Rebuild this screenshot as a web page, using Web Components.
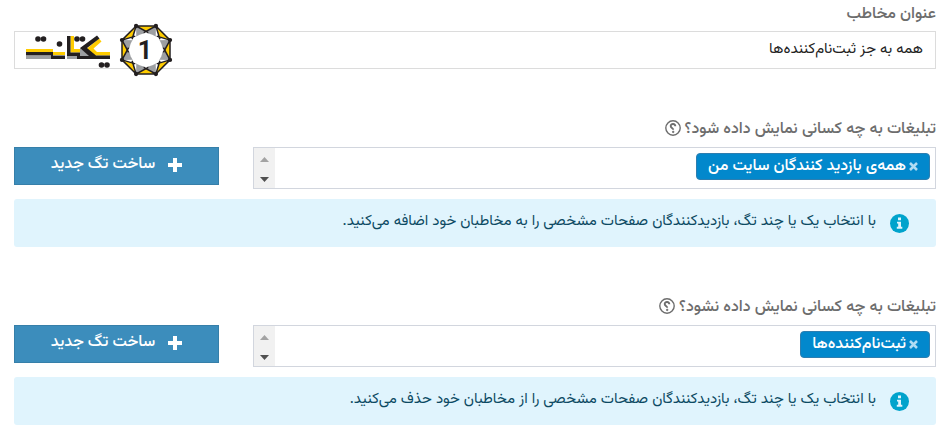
<!DOCTYPE html>
<html lang="fa" dir="rtl">
<head>
<meta charset="utf-8">
<title>مخاطب</title>
<style>
  body { margin: 0; background: #fff; font-family: Vazirmatn, "Noto Sans Arabic", "DejaVu Sans", sans-serif; font-size: 15px; line-height: 24px; color: #222; }
</style>
</head>
<body>
<audience-form></audience-form>

<script>
const define = (name, html, setup) => {
  const template = document.createElement("template");
  template.innerHTML = html;
  customElements.define(name, class extends HTMLElement {
    constructor() {
      super();
      this.attachShadow({ mode: "open" }).append(template.content.cloneNode(true));
    }
    connectedCallback() { if (setup) setup(this, this.shadowRoot); }
  });
};

/* Octagonal badge: rim triangles in yellow, corner facets in grey. */
const badge = () => {
  const at = (r, deg) => {
    const a = deg * Math.PI / 180;
    return `${(120 + r * Math.cos(a)).toFixed(1)},${(27 + r * Math.sin(a)).toFixed(1)}`;
  };
  let fills = "", lines = "";
  for (let i = 0; i < 8; i++) {
    const a = 22.5 + i * 45;
    const s = i % 2 ? 1 : -1;
    const [x, y] = at(26, a).split(",");
    fills += `<polygon points="${at(26, a)} ${at(26, a + 45)} ${at(19, a + 22.5)}" fill="#fc0"/>`;
    fills += `<polygon points="${at(26, a)} ${at(19, a + 22.5 * s)} ${at(15, a + 10 * s)} ${at(15, a - 18 * s)}" fill="#9d9fa2"/>`;
    lines += `<path d="M${at(26, a)}L${at(17.5, a + 30)}M${at(26, a)}L${at(17.5, a - 30)}M${at(26, a)}L${at(26, a + 45)}"/>`;
    lines += `<circle cx="${x}" cy="${y}" r="1.4" fill="#231f20"/>`;
  }
  return `<circle cx="120" cy="27" r="24" fill="#fff"/>${fills}<circle cx="120" cy="27" r="16.6" fill="#fff"/><g stroke="#231f20" stroke-width="1.5">${lines}</g>`;
};

define("brand-logo", `
  <style>
    :host { display: block; direction: ltr; pointer-events: none; }
    svg { display: block; }
  </style>
  <svg width="148" height="54" viewBox="0 0 148 54" fill="none" role="img" aria-label="یکتانت">
    <g fill="#fc0">
      <path d="M0 26H27V29H39V32H26V29H0Z"/>
      <path d="M44.500 13H48V26H55V29.500H44.500Z"/>
      <path d="M73 15.500L75.500 18.500L67.500 25.500L71 29H84V32.500H69L61 25.500Z"/>
    </g>
    <g fill="#9d9fa2">
      <path d="M0 33H25V36H0ZM41 33H51V36H41Z"/>
      <path d="M54 25L65 33H54Z"/>
    </g>
    <g fill="#231f20">
      <path d="M0 29H27V32.500H39V36H25V32.500H0Z"/>
      <path d="M41 13H44.500V29.500H54V33H41Z"/>
      <path d="M71 12.500L73.500 15.500L61 25L70 32.500H84V36H51V33H63L54 25Z"/>
      <circle cx="12" cy="16" r="2.800"/><circle cx="17.500" cy="16" r="2.800"/><circle cx="33.500" cy="21" r="2.800"/>
      <circle cx="51" cy="16" r="2.800"/><circle cx="56.500" cy="16" r="2.800"/><circle cx="75.500" cy="42" r="2.800"/><circle cx="81" cy="42" r="2.800"/>
    </g>
    ${badge()}
    <text x="119" y="36" text-anchor="middle" font-family="Roboto, sans-serif" font-weight="700" font-size="25" fill="#231f20">1</text>
  </svg>`);

define("title-field", `
  <style>
    :host { display: block; }
    label { display: block; margin-bottom: 4px; color: #6d6d6d; font-size: 16px; font-weight: 500; }
    .box { position: relative; }
    input { display: block; box-sizing: border-box; width: 100%; height: 38px; padding: 0 12px 2px; border: 1px solid #dcdcdc; border-radius: 0; background: #fff; font: inherit; color: #222; direction: rtl; outline: none; }
    ::slotted(*) { position: absolute; left: 12px; top: -8px; }
  </style>
  <label for="title"></label>
  <div class="box"><input id="title" type="text"><slot></slot></div>`,
  (host, root) => {
    root.querySelector("label").textContent = host.getAttribute("label");
    root.querySelector("input").value = host.getAttribute("value");
  });

define("tag-chip", `
  <style>
    :host { display: inline-flex; align-items: center; box-sizing: border-box; height: 27px; padding: 0 11px; border: 1px solid #2d7eb0; border-radius: 4px; background: #0288cc; color: #fff; font-size: 16px; font-weight: 500; white-space: nowrap; }
    button { display: flex; align-items: center; padding: 0; margin-left: 3px; border: 0; background: none; color: #b0dcf3; cursor: pointer; }
  </style>
  <button type="button" aria-label="حذف"><svg width="9" height="9" viewBox="0 0 9 9" stroke="currentColor" stroke-width="2.500"><path d="M1 1L8 8M8 1L1 8"/></svg></button>
  <slot></slot>`);

define("new-tag-button", `
  <style>
    :host { display: block; }
    button { display: flex; align-items: center; justify-content: center; gap: 13px; box-sizing: border-box; width: 100%; height: 38px; padding: 0 0 2px; border: 1px solid #367fa9; background: #3c8dbc; color: #fff; font: inherit; font-size: 16px; font-weight: 500; cursor: pointer; }
  </style>
  <button type="button"><svg width="14" height="14" viewBox="0 0 14 14" stroke="#fff" stroke-width="4"><path d="M7 0V14M0 7H14"/></svg><span><slot></slot></span></button>`);

define("info-note", `
  <style>
    :host { display: flex; align-items: center; gap: 14px; box-sizing: border-box; min-height: 48px; padding: 0 27px; border-radius: 3px; background: #e0f4fd; color: #0c4a63; }
    svg { flex: none; }
    span { padding-bottom: 2px; }
  </style>
  <svg width="19" height="19" viewBox="0 0 19 19"><circle cx="9.500" cy="9.500" r="9.500" fill="#00a3cc"/><path d="M8 3.500H11V6.200H8ZM7 7.700H11V12.800H12.300V14.800H6.800V12.800H8.200V9.500H7Z" fill="#e0f4fd"/></svg>
  <span><slot></slot></span>`);

define("tag-field", `
  <style>
    :host { display: block; }
    .head { display: flex; align-items: center; gap: 4px; margin-bottom: 5px; color: #6d6d6d; font-size: 16px; font-weight: 500; }
    .help { display: flex; padding: 0 0 4px; border: 0; background: none; color: inherit; cursor: help; }
    .row { display: grid; grid-template-columns: 10fr 3fr; gap: 34px; align-items: start; margin-bottom: 10px; }
    .box { display: flex; box-sizing: border-box; height: 42px; border: 1px solid #d2d6de; background: #fff; }
    .tags { flex: 1; display: flex; min-width: 0; align-items: flex-start; padding: 5px; gap: 5px; }
    input { flex: 1; min-width: 0; height: 27px; padding: 0; border: 0; outline: none; background: none; font: inherit; }
    .scroll { display: flex; flex-direction: column; width: 21px; background: #f1f1f1; }
    .scroll button { flex: 1; display: flex; align-items: center; justify-content: center; padding: 2px 0 0; border: 0; background: none; color: #505050; }
    .scroll button:first-child { color: #a3a3a3; }
  </style>
  <div class="head">
    <label for="search"></label>
    <button class="help" type="button" aria-label="راهنما"><svg width="16" height="16" viewBox="0 0 16 16" fill="none" stroke="currentColor"><circle cx="8" cy="8" r="7.200" stroke-width="1.400"/><path d="M10.300 6.300C10.300 3.200 5.700 3.200 5.700 6C5.700 8 8.200 7.800 8.200 9.800" stroke-width="1.900"/><circle cx="8.200" cy="11.900" r=".8" stroke-width=".8" fill="currentColor"/></svg></button>
  </div>
  <div class="row">
    <div class="box">
      <div class="tags"><slot name="tags"></slot><input id="search" type="text"></div>
      <div class="scroll">
        <button type="button" aria-label="بالا"><svg width="9" height="5"><path d="M0 5L4.500 0L9 5Z" fill="currentColor"/></svg></button>
        <button type="button" aria-label="پایین"><svg width="9" height="5"><path d="M0 0L4.500 5L9 0Z" fill="currentColor"/></svg></button>
      </div>
    </div>
    <new-tag-button>ساخت تگ جدید</new-tag-button>
  </div>
  <slot></slot>`,
  (host, root) => { root.querySelector("label").textContent = host.getAttribute("label"); });

define("audience-form", `
  <style>
    :host { display: flex; flex-direction: column; gap: 49px; padding: 3px 16px 18px 14px; }
  </style>
  <title-field label="عنوان مخاطب" value="همه به جز ثبت‌نام‌کننده‌ها"><brand-logo></brand-logo></title-field>
  <tag-field label="تبلیغات به چه کسانی نمایش داده شود؟">
    <tag-chip slot="tags">همه‌ی بازدید کنندگان سایت من</tag-chip>
    <info-note>با انتخاب یک یا چند تگ، بازدیدکنندگان صفحات مشخصی را به مخاطبان خود اضافه می‌کنید.</info-note>
  </tag-field>
  <tag-field label="تبلیغات به چه کسانی نمایش داده نشود؟">
    <tag-chip slot="tags">ثبت‌نام‌کننده‌ها</tag-chip>
    <info-note>با انتخاب یک یا چند تگ، بازدیدکنندگان صفحات مشخصی را از مخاطبان خود حذف می‌کنید.</info-note>
  </tag-field>`);
</script>
</body>
</html>
